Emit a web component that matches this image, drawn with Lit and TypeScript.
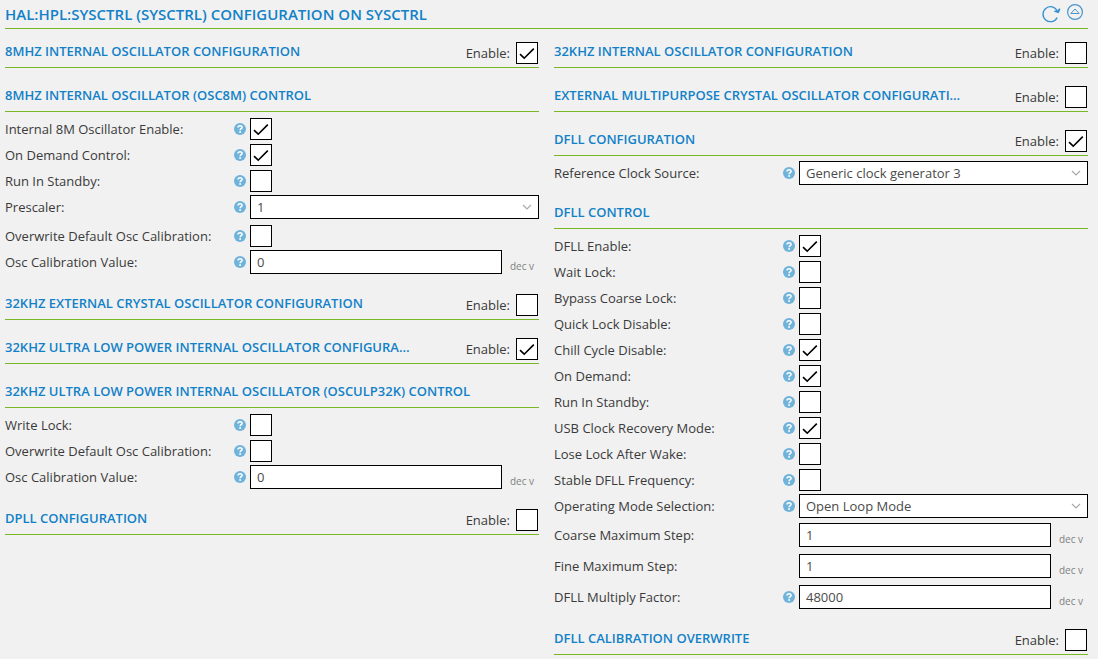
import { LitElement, html, css, svg, nothing } from "lit";
import { customElement, property } from "lit/decorators.js";

type Field =
  | { kind: "check"; label: string; on?: boolean }
  | { kind: "select"; label: string; value: string }
  | { kind: "number"; label: string; value: string; noHelp?: boolean };

interface Section {
  title: string;
  enable?: boolean;
  fields?: Field[];
}

const LEFT: Section[] = [
  { title: "8MHZ INTERNAL OSCILLATOR CONFIGURATION", enable: true },
  {
    title: "8MHZ INTERNAL OSCILLATOR (OSC8M) CONTROL",
    fields: [
      { kind: "check", label: "Internal 8M Oscillator Enable:", on: true },
      { kind: "check", label: "On Demand Control:", on: true },
      { kind: "check", label: "Run In Standby:" },
      { kind: "select", label: "Prescaler:", value: "1" },
      { kind: "check", label: "Overwrite Default Osc Calibration:" },
      { kind: "number", label: "Osc Calibration Value:", value: "0" },
    ],
  },
  { title: "32KHZ EXTERNAL CRYSTAL OSCILLATOR CONFIGURATION", enable: false },
  { title: "32KHZ ULTRA LOW POWER INTERNAL OSCILLATOR CONFIGURATION", enable: true },
  {
    title: "32KHZ ULTRA LOW POWER INTERNAL OSCILLATOR (OSCULP32K) CONTROL",
    fields: [
      { kind: "check", label: "Write Lock:" },
      { kind: "check", label: "Overwrite Default Osc Calibration:" },
      { kind: "number", label: "Osc Calibration Value:", value: "0" },
    ],
  },
  { title: "DPLL CONFIGURATION", enable: false },
];

const RIGHT: Section[] = [
  { title: "32KHZ INTERNAL OSCILLATOR CONFIGURATION", enable: false },
  { title: "EXTERNAL MULTIPURPOSE CRYSTAL OSCILLATOR CONFIGURATION", enable: false },
  {
    title: "DFLL CONFIGURATION",
    enable: true,
    fields: [{ kind: "select", label: "Reference Clock Source:", value: "Generic clock generator 3" }],
  },
  {
    title: "DFLL CONTROL",
    fields: [
      { kind: "check", label: "DFLL Enable:", on: true },
      { kind: "check", label: "Wait Lock:" },
      { kind: "check", label: "Bypass Coarse Lock:" },
      { kind: "check", label: "Quick Lock Disable:" },
      { kind: "check", label: "Chill Cycle Disable:", on: true },
      { kind: "check", label: "On Demand:", on: true },
      { kind: "check", label: "Run In Standby:" },
      { kind: "check", label: "USB Clock Recovery Mode:", on: true },
      { kind: "check", label: "Lose Lock After Wake:" },
      { kind: "check", label: "Stable DFLL Frequency:" },
      { kind: "select", label: "Operating Mode Selection:", value: "Open Loop Mode" },
      { kind: "number", label: "Coarse Maximum Step:", value: "1", noHelp: true },
      { kind: "number", label: "Fine Maximum Step:", value: "1", noHelp: true },
      { kind: "number", label: "DFLL Multiply Factor:", value: "48000" },
    ],
  },
  { title: "DFLL CALIBRATION OVERWRITE", enable: false },
];

const helpIcon = svg`<circle cx="5.5" cy="5.5" r="5.5" fill="#6fb2da"/>
  <path d="M3.7 4.2C3.7 2 7.4 2 7.4 4.1C7.4 5.3 5.6 5.2 5.6 6.6" fill="none" stroke="#fff" stroke-width="1.4"/>
  <rect x="4.8" y="7.5" width="1.6" height="1.5" fill="#fff"/>`;

@customElement("config-section")
export class ConfigSection extends LitElement {
  @property({ attribute: false }) section!: Section;

  static styles = css`
    :host {
      display: block;
      font: 13px/18px "Open Sans", "Noto Sans", sans-serif;
      color: #3a3a3a;
    }
    .head {
      display: flex;
      align-items: flex-start;
      gap: 50px;
      height: 38px;
      border-bottom: 1px solid #78b823;
      margin-bottom: 5px;
    }
    .title {
      flex: 1 1 0;
      min-width: 0;
      margin: 13px 0 0;
      font-size: 13px;
      line-height: 18px;
      font-weight: 600;
      color: #1181c8;
      white-space: nowrap;
      overflow: hidden;
      text-overflow: ellipsis;
    }
    .enable {
      display: flex;
      align-items: center;
      gap: 6px;
      margin: 13px 1px 0 0;
    }
    .row {
      display: grid;
      grid-template-columns: 229px 16px minmax(0, 1fr);
      align-items: center;
    }
    .check-row {
      height: 22px;
      padding: 1px 0 3px;
    }
    .select-row {
      height: 24px;
      padding-bottom: 5px;
    }
    .number-row {
      height: 24px;
      padding-bottom: 7px;
    }
    .help {
      width: 12px;
      height: 12px;
      padding: 0;
      border: 0;
      background: none;
      cursor: pointer;
    }
    .help svg {
      display: block;
    }
    .box {
      display: grid;
      width: 22px;
      height: 22px;
    }
    .box > * {
      grid-area: 1 / 1;
    }
    .box input {
      appearance: none;
      box-sizing: border-box;
      width: 22px;
      height: 22px;
      margin: 0;
      border: 1px solid #000;
      background: #fff;
    }
    .box svg {
      visibility: hidden;
      pointer-events: none;
      z-index: 1;
    }
    .box input:checked + svg {
      visibility: visible;
    }
    .drop {
      display: grid;
      align-items: center;
    }
    .drop > * {
      grid-area: 1 / 1;
    }
    .drop svg {
      justify-self: end;
      margin-right: 7px;
      pointer-events: none;
      z-index: 1;
    }
    .text {
      appearance: none;
      box-sizing: border-box;
      width: 100%;
      min-width: 0;
      height: 24px;
      margin: 0;
      padding: 0 6px;
      border: 1px solid #000;
      border-radius: 0;
      background: #fff;
      color: #4a4a4a;
      font: inherit;
    }
    .entry {
      display: grid;
      grid-template-columns: minmax(0, 1fr) 29px;
      gap: 8px;
    }
    .unit {
      align-self: end;
      font-size: 10px;
      line-height: 16px;
      color: #808080;
    }
  `;

  private box(id: string, on: boolean) {
    return html`<span class="box">
      <input type="checkbox" id=${id} .checked=${on} />
      <svg width="22" height="22" viewBox="0 0 22 22" aria-hidden="true">
        <path d="M4 12.2L8.2 16.2L17.8 6.6" fill="none" stroke="#000" stroke-width="1.6" />
      </svg>
    </span>`;
  }

  private control(f: Field, id: string) {
    if (f.kind === "check") return this.box(id, !!f.on);
    if (f.kind === "select")
      return html`<span class="drop">
        <select class="text" id=${id}>
          <option>${f.value}</option>
        </select>
        <svg width="10" height="7" viewBox="0 0 10 7" aria-hidden="true">
          <path d="M1 1L5 5L9 1" fill="none" stroke="#aaa" stroke-width="1.2" />
        </svg>
      </span>`;
    return html`<span class="entry">
      <input class="text" type="text" id=${id} .value=${f.value} /><span class="unit">dec v</span>
    </span>`;
  }

  render() {
    const s = this.section;
    return html`
      <div class="head">
        <h2 class="title">${s.title}</h2>
        ${s.enable !== undefined
          ? html`<div class="enable"><label for="enable">Enable:</label>${this.box("enable", s.enable)}</div>`
          : nothing}
      </div>
      ${(s.fields ?? []).map((f, i) => {
        const id = `field-${i}`;
        return html`<div class="row ${f.kind}-row">
          <label for=${id}>${f.label}</label>
          ${f.kind === "number" && f.noHelp
            ? html`<span></span>`
            : html`<button class="help" type="button" aria-label="Help">
                <svg width="12" height="12" viewBox="0 0 11 11">${helpIcon}</svg>
              </button>`}
          ${this.control(f, id)}
        </div>`;
      })}
    `;
  }
}

@customElement("app-root")
export class AppRoot extends LitElement {
  static styles = css`
    :host {
      display: block;
      box-sizing: border-box;
      min-height: 100vh;
      padding: 0 10px 0 5px;
      background: #f1f1f1;
      font-family: "Open Sans", "Noto Sans", sans-serif;
    }
    .bar {
      display: flex;
      align-items: center;
      justify-content: space-between;
      height: 28px;
      border-bottom: 1px solid #78b823;
    }
    .name {
      margin: 0;
      font-size: 15px;
      line-height: 20px;
      font-weight: 600;
      color: #1181c8;
    }
    .tools {
      display: flex;
      gap: 6px;
      margin-right: 4px;
    }
    .tool {
      padding: 0;
      border: 0;
      background: none;
      cursor: pointer;
    }
    .tool svg {
      display: block;
    }
    .columns {
      display: grid;
      grid-template-columns: repeat(2, minmax(0, 1fr));
      gap: 15px;
      align-items: start;
    }
  `;

  render() {
    const column = (list: Section[]) =>
      html`<div>${list.map((s) => html`<config-section .section=${s}></config-section>`)}</div>`;
    return html`
      <header class="bar">
        <h1 class="name">HAL:HPL:SYSCTRL (SYSCTRL) CONFIGURATION ON SYSCTRL</h1>
        <div class="tools">
          <button class="tool" type="button" aria-label="Reset">
            <svg width="19" height="22" viewBox="0 0 19 22" fill="none" stroke="#3391cf" stroke-width="1.3">
              <path d="M15.2 14.6A7.5 7.5 0 1 1 15.4 8.2" />
              <path d="M12.4 8.2L16.4 9.4L17.8 5.8L15.6 8.2Z" fill="#3391cf" />
            </svg>
          </button>
          <button class="tool" type="button" aria-label="Collapse">
            <svg width="17" height="22" viewBox="0 0 17 22" fill="none" stroke="#4a95cb" stroke-width="1.2">
              <circle cx="8" cy="9" r="7.4" />
              <path d="M3.8 10.5H12.2L8 6Z" stroke-width="1" />
            </svg>
          </button>
        </div>
      </header>
      <main class="columns">${column(LEFT)}${column(RIGHT)}</main>
    `;
  }
}
